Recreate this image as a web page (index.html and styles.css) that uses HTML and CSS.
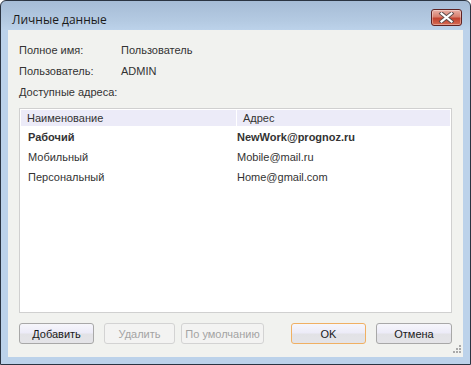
FILE: index.html
```html
<!DOCTYPE html>
<html lang="ru">
<head>
<meta charset="utf-8">
<title>Личные данные</title>
<link rel="stylesheet" href="styles.css">
</head>
<body>
<div class="window">
  <div class="titlebar">
    <span class="title">Личные данные</span>
    <button class="close" aria-label="Закрыть">
      <svg width="17" height="11" viewBox="0 0 17 11">
        <path d="M3.5 1.5 L13.5 9.5 M13.5 1.5 L3.5 9.5" stroke="#5a4a4a" stroke-width="4" stroke-linecap="square" fill="none"/>
        <path d="M3.5 1.5 L13.5 9.5 M13.5 1.5 L3.5 9.5" stroke="#ffffff" stroke-width="2.2" stroke-linecap="square" fill="none"/>
      </svg>
    </button>
  </div>
  <div class="content">
    <div class="field"><span class="label">Полное имя:</span><span class="value">Пользователь</span></div>
    <div class="field"><span class="label">Пользователь:</span><span class="value">ADMIN</span></div>
    <div class="field"><span class="label">Доступные адреса:</span></div>
    <div class="table">
      <div class="row head">
        <div class="cell c1">Наименование</div>
        <div class="cell c2">Адрес</div>
      </div>
      <div class="row bold">
        <div class="cell c1">Рабочий</div>
        <div class="cell c2">NewWork@prognoz.ru</div>
      </div>
      <div class="row">
        <div class="cell c1">Мобильный</div>
        <div class="cell c2">Mobile@mail.ru</div>
      </div>
      <div class="row">
        <div class="cell c1">Персональный</div>
        <div class="cell c2">Home@gmail.com</div>
      </div>
    </div>
    <div class="buttons">
      <button class="btn w75">Добавить</button>
      <button class="btn disabled w71" disabled>Удалить</button>
      <button class="btn disabled w83" disabled>По умолчанию</button>
      <span class="spacer"></span>
      <button class="btn default w75">OK</button>
      <button class="btn w76">Отмена</button>
    </div>
    <svg class="grip" width="12" height="12" viewBox="0 0 12 12">
      <g fill="#a9a9a9">
        <rect x="9" y="1" width="2" height="2"/>
        <rect x="6" y="4" width="2" height="2"/>
        <rect x="9" y="4" width="2" height="2"/>
        <rect x="3" y="7" width="2" height="2"/>
        <rect x="6" y="7" width="2" height="2"/>
        <rect x="9" y="7" width="2" height="2"/>
      </g>
    </svg>
  </div>
</div>
</body>
</html>
```
FILE: styles.css
```css
* { box-sizing: border-box; }
html, body { margin: 0; padding: 0; background: #ffffff; }
body { font-family: "Liberation Sans", Arial, sans-serif; font-size: 11px; color: #333333; }

.window {
  width: 471px;
  height: 365px;
  border: 1px solid #2b3442;
  border-radius: 6px 6px 0 0;
  background: linear-gradient(to bottom, #a6bcd6 0px, #b4cae2 20px, #bcd2ea 29px, #bcd2ea 100%);
  display: flex;
  flex-direction: column;
}

.titlebar {
  height: 29px;
  display: flex;
  align-items: flex-start;
  padding-left: 11px;
  flex: none;
}
.title {
  font-family: "Open Sans", "Liberation Sans", sans-serif;
  font-size: 12px;
  color: #1a1a1a;
  margin-top: 12px;
  line-height: 14px;
}
.close {
  margin-left: auto;
  margin-right: 8px;
  margin-top: 8px;
  width: 31px;
  height: 17px;
  padding: 0;
  border: 1px solid #5f2222;
  border-radius: 3px;
  background: linear-gradient(to bottom, #e9b0a6 0%, #d8806f 45%, #c2422f 55%, #d66a52 100%);
  box-shadow: inset 0 0 0 1px rgba(255,255,255,0.35);
  display: flex;
  align-items: center;
  justify-content: center;
}
.close svg { display: block; }

.content {
  flex: 1;
  margin: 0 7px 7px 7px;
  background: #f1f2ef;
  padding: 9px 11px 13px 11px;
  display: flex;
  flex-direction: column;
  position: relative;
}

.field {
  height: 21px;
  display: flex;
  align-items: center;
}
.label { width: 102px; }

.table {
  margin-top: 6px;
  height: 205px;
  border: 1px solid #d0d0d0;
  background: #ffffff;
  padding: 1px;
}
.row {
  display: flex;
  height: 20px;
  align-items: center;
}
.row.head {
  height: 16px;
  background: #ecebf8;
  margin-bottom: 1px;
}
.cell.c1 { width: 215px; padding-left: 7px; }
.cell.c2 { flex: 1; padding-left: 1px; }
.row.head .cell { height: 16px; line-height: 16px; padding-left: 6px; }
.row.head .cell.c1 { border-right: 1px solid #ffffff; width: 216px; }
.row.bold { font-weight: bold; }

.buttons {
  margin-top: 10px;
  display: flex;
  align-items: center;
  height: 21px;
}
.btn {
  height: 21px;
  font-family: "Liberation Sans", Arial, sans-serif;
  font-size: 11px;
  color: #1a1a1a;
  border: 1px solid #a8a8a8;
  border-radius: 3px;
  background: linear-gradient(to bottom, #f6f6fb 0%, #ecebf8 48%, #e2e2e6 52%, #e4e4e8 100%);
  padding: 0;
  margin-right: 10px;
}
.btn.w75 { width: 75px; }
.btn.w71 { width: 71px; margin-right: 6px; }
.btn.w83 { width: 83px; }
.btn.w76 { width: 76px; margin-right: 0; }
.btn.disabled {
  color: #a3a3a3;
  border-color: #d3d3d3;
  background: #f3f3f2;
}
.btn.default {
  border-color: #f0b063;
}
.spacer { flex: 1; }

.grip {
  position: absolute;
  right: 1px;
  bottom: 1px;
}
```
